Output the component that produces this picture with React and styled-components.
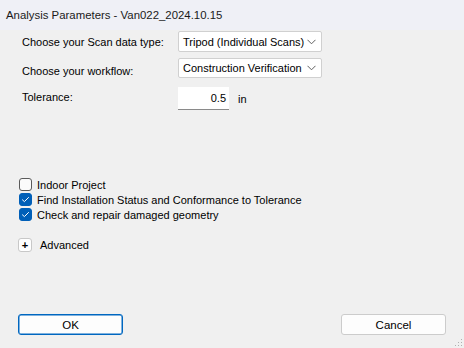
import React from 'react';
import styled, { createGlobalStyle } from 'styled-components';

const GlobalStyle = createGlobalStyle`
    html, body {
        margin: 0;
        padding: 0;
        background: #f0f0f0;
    }
    * {
        box-sizing: border-box;
    }
`;

const Window = styled.div`
    position: relative;
    width: 464px;
    height: 348px;
    display: flex;
    flex-direction: column;
    background: #f0f0f0;
    font-family: 'Liberation Sans', Arial, sans-serif;
    font-size: 11px;
    color: #000;
    overflow: hidden;
    white-space: nowrap;
`;

const TitleBar = styled.div`
    height: 30px;
    flex: none;
    display: flex;
    align-items: center;
    padding: 0 0 1px 6px;
    background: #eff0f6;
    font-size: 11.4px;
    color: #1a1a1a;
`;

const Body = styled.div`
    flex: 1;
    display: flex;
    flex-direction: column;
    padding: 1px 18px 0 18px;
`;

const Form = styled.div`
    display: grid;
    grid-template-columns: 156px auto;
    row-gap: 6px;
    padding-left: 4px;
`;

const Label = styled.div`
    display: flex;
    align-items: center;
    padding-top: ${p => p.$shift || 0}px;
`;

const Combo = styled.div`
    width: 144px;
    height: ${p => p.$h || 21}px;
    display: flex;
    align-items: center;
    justify-content: space-between;
    padding: 0 5px 0 4px;
    background: #fff;
    border: 1px solid #d0d0d0;
    border-radius: 2px;
`;

const Chevron = () => (
    <svg width="9" height="6" viewBox="0 0 9 6">
        <path d="M0.5 0.8 L4.5 4.8 L8.5 0.8" fill="none" stroke="#606060" strokeWidth="1" />
    </svg>
);

const InputRow = styled.div`
    display: flex;
    align-items: center;
    gap: 9px;
    margin-top: 3px;
`;

const NumInput = styled.div`
    width: 51px;
    height: 23px;
    display: flex;
    align-items: center;
    justify-content: flex-end;
    padding: 0 3px 0 0;
    background: #fff;
    border-bottom: 1px solid #8a8a8a;
`;

const Checks = styled.div`
    display: flex;
    flex-direction: column;
    gap: 2px;
    margin-top: 68px;
    padding-left: 1px;
`;

const CheckRow = styled.label`
    display: flex;
    align-items: center;
    gap: 5px;
    height: 13px;
`;

const Box = styled.span`
    width: 13px;
    height: 13px;
    flex: none;
    display: flex;
    align-items: center;
    justify-content: center;
    border-radius: 3px;
    background: ${p => (p.$checked ? '#005fb8' : '#fbfbfb')};
    border: 1px solid ${p => (p.$checked ? '#005fb8' : '#5a5a5a')};
`;

const Tick = () => (
    <svg width="9" height="7" viewBox="0 0 9 7">
        <path d="M1.2 3.6 L3.4 5.6 L7.8 1.2" fill="none" stroke="#fff" strokeWidth="1" />
    </svg>
);

const AdvancedRow = styled.div`
    display: flex;
    align-items: center;
    gap: 8px;
    margin-top: 17px;
`;

const PlusBox = styled.span`
    width: 14px;
    height: 14px;
    display: flex;
    align-items: center;
    justify-content: center;
    background: #fff;
    border: 1px solid #c8c8c8;
    border-radius: 3px;
    font-size: 11px;
    font-weight: bold;
    line-height: 1;
`;

const Footer = styled.div`
    display: flex;
    justify-content: space-between;
    margin-top: auto;
    margin-bottom: 13px;
`;

const Button = styled.button`
    width: 105px;
    height: 21px;
    padding: 0;
    font-family: inherit;
    font-size: 11.5px;
    color: #000;
    background: #fdfdfd;
    border: 1px solid ${p => (p.$primary ? '#0067c0' : '#cccccc')};
    border-radius: 3px;
    box-shadow: ${p => (p.$primary ? 'inset 0 0 0 0.5px #0067c0' : 'none')};
`;

const Grip = styled.svg`
    position: absolute;
    right: 1px;
    bottom: 1px;
`;

const options = [
    { label: 'Indoor Project', checked: false },
    { label: 'Find Installation Status and Conformance to Tolerance', checked: true },
    { label: 'Check and repair damaged geometry', checked: true },
];

export default function App() {
    return (
        <>
            <GlobalStyle />
            <Window>
                <TitleBar>Analysis Parameters - Van022_2024.10.15</TitleBar>
                <Body>
                    <Form>
                        <Label>Choose your Scan data type:</Label>
                        <Combo>
                            <span>Tripod (Individual Scans)</span>
                            <Chevron />
                        </Combo>
                        <Label $shift={6}>Choose your workflow:</Label>
                        <Combo $h={20}>
                            <span>Construction Verification</span>
                            <Chevron />
                        </Combo>
                        <Label>Tolerance:</Label>
                        <InputRow>
                            <NumInput>0.5</NumInput>
                            <span>in</span>
                        </InputRow>
                    </Form>
                    <Checks>
                        {options.map(o => (
                            <CheckRow key={o.label}>
                                <Box $checked={o.checked}>{o.checked && <Tick />}</Box>
                                <span>{o.label}</span>
                            </CheckRow>
                        ))}
                    </Checks>
                    <AdvancedRow>
                        <PlusBox>+</PlusBox>
                        <span>Advanced</span>
                    </AdvancedRow>
                    <Footer>
                        <Button $primary>OK</Button>
                        <Button>Cancel</Button>
                    </Footer>
                </Body>
                <Grip width="8" height="8" viewBox="0 0 8 8">
                    <rect x="6" y="0" width="1" height="1" fill="#b0b0b0" />
                    <rect x="3" y="3" width="1" height="1" fill="#b0b0b0" />
                    <rect x="6" y="3" width="1" height="1" fill="#b0b0b0" />
                    <rect x="0" y="6" width="1" height="1" fill="#b0b0b0" />
                    <rect x="3" y="6" width="1" height="1" fill="#b0b0b0" />
                    <rect x="6" y="6" width="1" height="1" fill="#b0b0b0" />
                </Grip>
            </Window>
        </>
    );
}
